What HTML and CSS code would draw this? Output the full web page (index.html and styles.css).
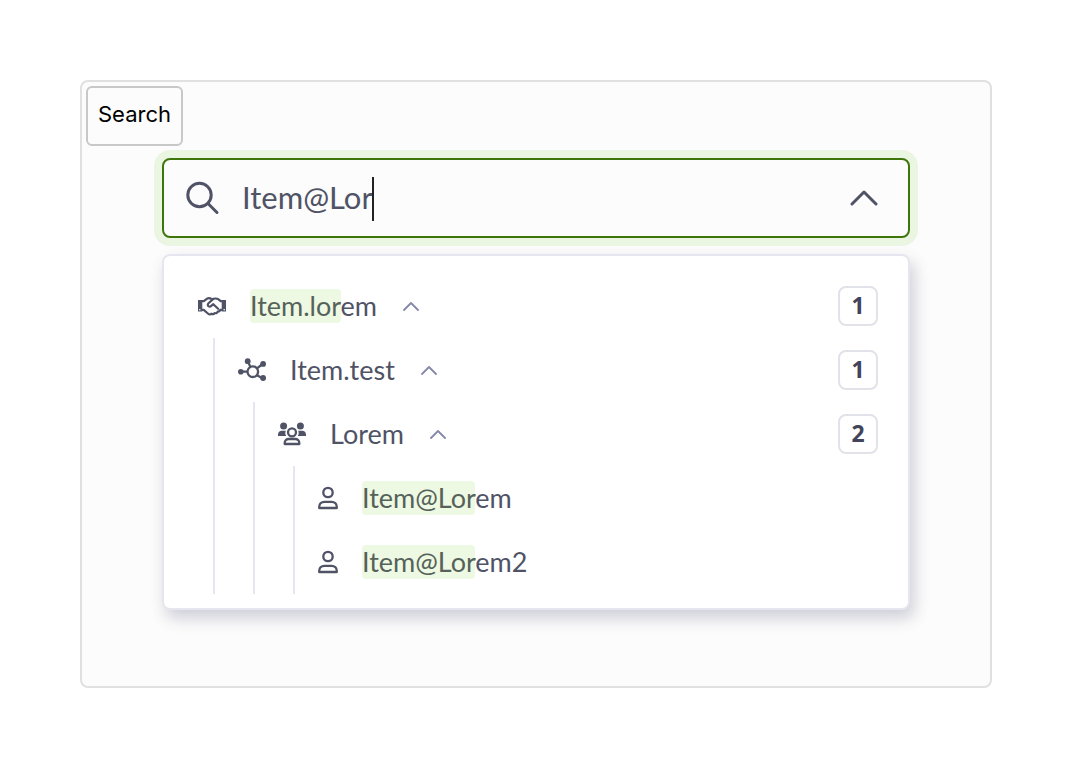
FILE: index.html
```html
<!DOCTYPE html>
<html lang="en">
<head>
  <meta charset="UTF-8">
  <meta name="viewport" content="width=device-width, initial-scale=1.0">
  <title>Tree Search</title>
  <link rel="stylesheet" href="styles.css">
</head>
<body>

<!-- Shared icons -->
<svg class="sprite" aria-hidden="true">
  <symbol id="chevron" viewBox="0 0 16 9">
    <path d="M1 8l7-7 7 7" fill="none" stroke="currentColor" stroke-width="1.8" stroke-linecap="round" stroke-linejoin="round"/>
  </symbol>
  <symbol id="user" viewBox="0 0 20 24">
    <g fill="none" stroke="currentColor" stroke-width="2.300" stroke-linejoin="round">
      <circle cx="10" cy="6.500" r="4.700"/>
      <path d="M1.200 22v-1c0-3.200 2.300-5.200 5.300-5.200h7c3 0 5.300 2 5.300 5.200v1z"/>
    </g>
  </symbol>
</svg>

<main class="stage">
  <label class="caption" for="search">Search</label>

  <!-- Search box -->
  <div class="field">
    <svg class="search-icon" viewBox="0 0 34 34" aria-hidden="true">
      <g fill="none" stroke="currentColor" stroke-width="3" stroke-linecap="round">
        <circle cx="13.500" cy="14" r="11.700"/>
        <path d="M22 22.500l9 9"/>
      </g>
    </svg>
    <div class="entry">
      <input id="search" class="search-input" type="text" value="Item@Lor" autocomplete="off" spellcheck="false">
      <span class="caret"></span>
    </div>
    <button class="toggle" type="button" aria-label="Close list">
      <svg class="toggle-icon" viewBox="0 0 28 16" aria-hidden="true">
        <path d="M2 14L14 2l12 12" fill="none" stroke="currentColor" stroke-width="3" stroke-linecap="round" stroke-linejoin="round"/>
      </svg>
    </button>
  </div>

  <!-- Results -->
  <div class="dropdown">
    <ul class="tree">
      <li>
        <div class="row">
          <svg class="icon" viewBox="0 0 28 24" aria-hidden="true">
            <path d="M0 6h4.300v11.500H0zM23.700 6H28v11.500h-4.300z" fill="currentColor"/>
            <g fill="none" stroke="currentColor" stroke-width="2.200" stroke-linecap="round" stroke-linejoin="round">
              <path d="M4.500 7.200h1.300l3-2.400c1.200-.9 3-.9 4.400 0l1 .6c1.500-1 4.500-1.200 6-.2l2.500 2h1"/>
              <path d="M4.500 15.800h1.200l4.200 3.700c1.300 1.100 2.600 1 3.500.2 1.300.8 2.600.5 3.200-.6 1.500.4 2.700-.2 3-1.400 1.300.1 2.300-.6 2.600-1.900h1.300"/>
              <path d="M14.800 5.400l-4.300 3.900c-1 1-.9 2.200 0 2.900 1 .7 2 .4 2.800-.3l2-1.700 4.800 4.600"/>
            </g>
            <g fill="#fff"><circle cx="1.800" cy="15.700" r=".8"/><circle cx="26.200" cy="15.700" r=".8"/></g>
          </svg>
          <span><mark>Item.lor</mark>em</span>
          <button class="fold" type="button" aria-label="Collapse Item.lorem"><svg class="fold-icon"><use href="#chevron"/></svg></button>
          <span class="count">1</span>
        </div>
        <ul class="branch">
          <li>
            <div class="row">
              <svg class="icon" viewBox="0 0 28 24" aria-hidden="true">
                <g fill="none" stroke="currentColor" stroke-width="2.300">
                  <circle cx="14.800" cy="13.700" r="5.300"/>
                  <path d="M4 13.700h5.500M10 4l2.400 4.800M19 10.300l5-3.800M19 17.200l5 2.800"/>
                </g>
                <g fill="currentColor">
                  <circle cx="2.800" cy="13.700" r="2.800"/>
                  <circle cx="9.700" cy="3.200" r="2.900"/>
                  <circle cx="25.100" cy="5.900" r="2.900"/>
                  <circle cx="25.100" cy="20" r="2.900"/>
                </g>
              </svg>
              <span>Item.test</span>
              <button class="fold" type="button" aria-label="Collapse Item.test"><svg class="fold-icon"><use href="#chevron"/></svg></button>
              <span class="count">1</span>
            </div>
            <ul class="branch">
              <li>
                <div class="row">
                  <svg class="icon" viewBox="0 0 28 24" aria-hidden="true">
                    <g fill="currentColor">
                      <circle cx="5.600" cy="4" r="3.500"/>
                      <circle cx="22.400" cy="4" r="3.500"/>
                      <path d="M0 14v-1.500c0-2.300 1.700-3.800 3.800-3.800h4c-.8 1.900-.6 3.600.4 5.300zM28 14v-1.500c0-2.300-1.700-3.800-3.800-3.800h-4c.8 1.900.6 3.600-.4 5.300z"/>
                    </g>
                    <g fill="none" stroke="currentColor" stroke-width="2.300" stroke-linejoin="round">
                      <circle cx="14" cy="10.300" r="4"/>
                      <path d="M6.700 22v-1c0-2.400 1.800-4 4-4h6.600c2.200 0 4 1.600 4 4v1z"/>
                    </g>
                  </svg>
                  <span>Lorem</span>
                  <button class="fold" type="button" aria-label="Collapse Lorem"><svg class="fold-icon"><use href="#chevron"/></svg></button>
                  <span class="count">2</span>
                </div>
                <ul class="branch">
                  <li class="row">
                    <svg class="icon icon-user" aria-hidden="true"><use href="#user"/></svg>
                    <span><mark>Item@Lor</mark>em</span>
                  </li>
                  <li class="row">
                    <svg class="icon icon-user" aria-hidden="true"><use href="#user"/></svg>
                    <span><mark>Item@Lor</mark>em2</span>
                  </li>
                </ul>
              </li>
            </ul>
          </li>
        </ul>
      </li>
    </ul>
  </div>
</main>

</body>
</html>
```
FILE: styles.css
```css
* { box-sizing: border-box; }
body { margin: 0; padding: 80px; background: #fff; color: #4f5365; font-family: Lato, sans-serif; }
ul { list-style: none; margin: 0; padding: 0; }
button { border: 0; padding: 0; background: none; color: inherit; cursor: pointer; }
svg { display: block; flex: none; }
.sprite { position: absolute; width: 0; height: 0; }

.stage { padding: 4px 4px 76px; background: #fcfcfc; border: 2px solid #e0e0e0; border-radius: 8px; }
.caption { display: block; width: fit-content; padding: 8px 10px 12px; border: 2px solid #c8c8c8; border-radius: 6px; color: #000; font: 22px/36px Inter, sans-serif; }

/* Search box */
.field { display: flex; align-items: center; height: 80px; margin: 12px 76px 16px; padding: 0 30px 0 22px; border: 2px solid #3f760b; border-radius: 8px; box-shadow: 0 0 0 8px #eaf6e1; }
.search-icon { width: 34px; height: 34px; }
.entry { position: relative; flex: 1; margin-left: 22px; }
.search-input { display: block; width: 100%; height: 44px; padding: 0 0 2px; border: 0; outline: 0; background: none; color: inherit; font: 31px/42px Lato, sans-serif; }
.caret { position: absolute; top: 1px; left: 130px; width: 2px; height: 44px; background: #222; }
.toggle-icon { width: 28px; height: 16px; }

/* Results */
.dropdown { margin: 0 76px; padding: 18px 30px 14px 34px; background: #fff; border: 2px solid #e6e6f0; border-radius: 8px; box-shadow: 4px 8px 16px rgba(60, 60, 100, 0.24); }
.branch { margin-left: 15px; padding-left: 23px; border-left: 2px solid #e6e6f0; }
.row { display: flex; align-items: center; height: 64px; font-size: 27px; line-height: 32px; }
.icon { width: 28px; height: 24px; margin-right: 24px; }
.icon-user { width: 20px; }
mark { padding: 0 0 1px; border-radius: 4px; background: #edf9e3; color: #566259; }
.fold { margin-left: 26px; color: #8588a8; }
.fold-icon { width: 16px; height: 9px; }
.count { width: 40px; height: 40px; margin-left: auto; border: 2px solid #e2e2e9; border-radius: 8px; color: #41445a; font: bold 23px/34px "Noto Sans", sans-serif; text-align: center; }
```
